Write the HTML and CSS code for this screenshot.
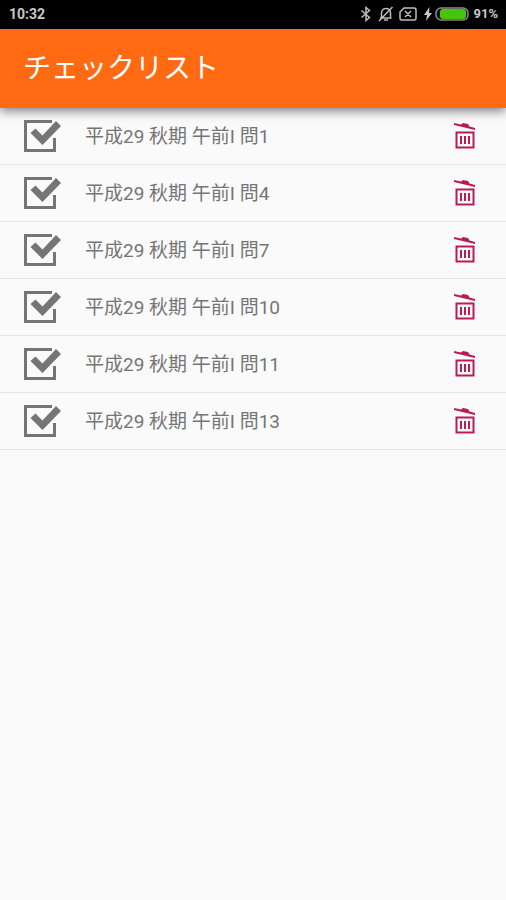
FILE: index.html
```html
<!DOCTYPE html>
<html lang="ja">
<head>
<meta charset="utf-8">
<meta name="viewport" content="width=device-width, initial-scale=1">
<title>チェックリスト</title>
<link rel="stylesheet" href="styles.css">
</head>
<body>
<svg class="sprite" aria-hidden="true">
  <symbol id="check" viewBox="0 0 38 34">
    <path class="check-box" d="M28 2.500H1.500V31.500H30.500V19"/>
    <path class="check-mark" d="M6.500 14l5-4.500 7 7L32 2l5 5-18.500 19z"/>
  </symbol>
  <symbol id="trash" viewBox="0 0 22 26">
    <path class="trash-fill" d="M0 0l7 1.500 2-1.500 5 1 1.500 2.500L21 5v2L0 2z"/>
    <path class="trash-line" d="M2.500 9.500h17v15h-17z"/>
    <path class="trash-bars" d="M7 13v8M11 13v8M15 13v8"/>
  </symbol>
</svg>
<div class="status">
  <time>10:32</time>
  <div class="status-icons">
    <svg class="bluetooth" viewBox="0 0 12 16"><path d="M1.500 4.500l8 7L6 14.500V1.500l3.500 3-8 7"/></svg>
    <svg class="bell" viewBox="0 0 16 16"><path d="M2 12h11.500M3.500 12V7c0-6 9-6 9 0v5M6 14h4M14.500 1L1 15"/></svg>
    <svg class="sim" viewBox="0 0 18 16"><path d="M5 2h10q2 0 2 2v8q0 2-2 2H3q-2 0-2-2V6zM6 5l6 6M12 5l-6 6"/></svg>
    <svg class="bolt" viewBox="0 0 8 14"><path d="M5.500 0L0 8h3L2 14l6-8H5z"/></svg>
    <svg class="battery" viewBox="0 0 34 14"><rect class="battery-case" x="1" y="1" width="32" height="12" rx="5"/><rect class="battery-level" x="5" y="2" width="26" height="10" rx="3"/></svg>
    <span>91%</span>
  </div>
</div>
<header class="appbar"><h1>チェックリスト</h1></header>
<main>
  <ul class="list">
    <li class="row"><label class="item"><span class="tick"><input type="checkbox" checked><svg><use href="#check"/></svg></span><span class="name">平成29 秋期 午前I 問1</span></label><button class="remove" type="button" aria-label="削除"><svg><use href="#trash"/></svg></button></li>
    <li class="row"><label class="item"><span class="tick"><input type="checkbox" checked><svg><use href="#check"/></svg></span><span class="name">平成29 秋期 午前I 問4</span></label><button class="remove" type="button" aria-label="削除"><svg><use href="#trash"/></svg></button></li>
    <li class="row"><label class="item"><span class="tick"><input type="checkbox" checked><svg><use href="#check"/></svg></span><span class="name">平成29 秋期 午前I 問7</span></label><button class="remove" type="button" aria-label="削除"><svg><use href="#trash"/></svg></button></li>
    <li class="row"><label class="item"><span class="tick"><input type="checkbox" checked><svg><use href="#check"/></svg></span><span class="name">平成29 秋期 午前I 問10</span></label><button class="remove" type="button" aria-label="削除"><svg><use href="#trash"/></svg></button></li>
    <li class="row"><label class="item"><span class="tick"><input type="checkbox" checked><svg><use href="#check"/></svg></span><span class="name">平成29 秋期 午前I 問11</span></label><button class="remove" type="button" aria-label="削除"><svg><use href="#trash"/></svg></button></li>
    <li class="row"><label class="item"><span class="tick"><input type="checkbox" checked><svg><use href="#check"/></svg></span><span class="name">平成29 秋期 午前I 問13</span></label><button class="remove" type="button" aria-label="削除"><svg><use href="#trash"/></svg></button></li>
  </ul>
</main>
</body>
</html>
```
FILE: styles.css
```css
* { box-sizing: border-box; }
body {
  margin: 0;
  min-height: 100vh;
  background: #fafafa;
  color: #757575;
  font-family: Roboto, "Noto Sans CJK JP", sans-serif;
}
svg { display: block; }
.sprite { display: none; }

.status {
  display: flex;
  align-items: center;
  justify-content: space-between;
  height: 29px;
  padding: 0 8px 1px 9px;
  background: #000;
  color: #c8c8c8;
  font-size: 14px;
  font-weight: 700;
  line-height: 28px;
}
.status-icons { display: flex; align-items: center; font-size: 13px; }
.status-icons path { fill: none; stroke: #bdbdbd; stroke-width: 1.5; }
.status-icons .bluetooth { width: 12px; height: 16px; margin-right: 6px; }
.status-icons .bell { width: 16px; height: 16px; margin-right: 5px; }
.status-icons .sim { width: 18px; height: 16px; margin-right: 7px; }
.status-icons .bolt { width: 8px; height: 14px; margin-right: 3px; }
.status-icons .bolt path { fill: #c8c8c8; stroke: none; }
.status-icons .battery { width: 34px; height: 14px; margin-right: 4px; }
.battery-case { fill: #000; stroke: #8c8c8c; stroke-width: 1.5; }
.battery-level { fill: #49c40c; }

.appbar {
  position: relative;
  display: flex;
  align-items: center;
  height: 79px;
  padding: 0 23px;
  background: #ff6a13;
  box-shadow: 0 3px 10px rgba(0, 0, 0, .5);
}
.appbar h1 { margin: 0; color: #fff; font-size: 28px; font-weight: 400; line-height: 40px; }

.list { margin: 0; padding: 0; list-style: none; }
.row {
  display: flex;
  align-items: center;
  height: 57px;
  padding: 0 24px;
  border-bottom: 1px solid #e4e4e4;
}
.item { display: flex; flex: 1; align-items: center; gap: 23px; font-size: 19px; line-height: 28px; }
.name { padding-top: 2px; }
.tick { display: grid; }
.tick input, .tick svg { grid-area: 1 / 1; width: 38px; height: 34px; margin: 0; }
.tick input { appearance: none; }
.tick svg { pointer-events: none; }
.check-box { fill: none; stroke: #757575; stroke-width: 3; }
.check-mark { fill: #757575; }
.tick input:not(:checked) + svg { opacity: .5; }

.remove { padding: 0 6px; border: 0; background: none; }
.remove svg { width: 22px; height: 26px; }
.trash-fill { fill: #b91c55; }
.trash-line { fill: none; stroke: #b91c55; stroke-width: 2; }
.trash-bars { stroke: #b91c55; stroke-width: 2; }
```
